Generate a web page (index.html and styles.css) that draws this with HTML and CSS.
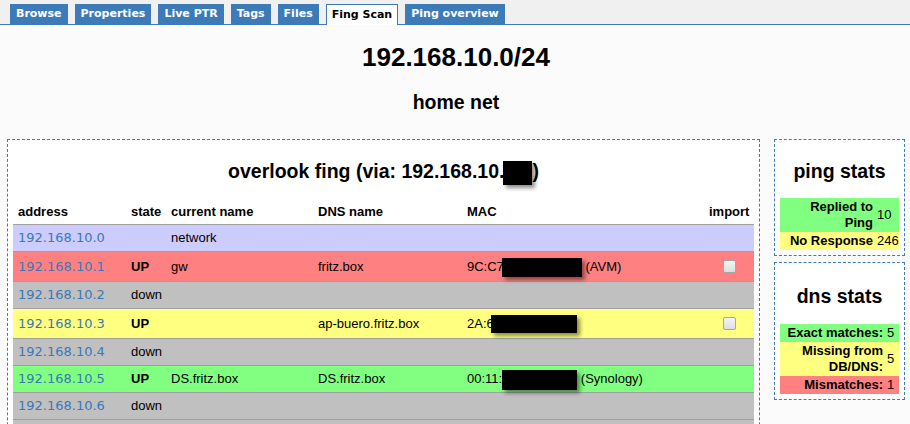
FILE: index.html
```html
<!DOCTYPE html>
<html lang="en">
<head>
<meta charset="utf-8">
<title>Fing Scan - 192.168.10.0/24</title>
<link rel="stylesheet" href="styles.css">
</head>
<body>
<nav class="tabs">
  <a class="tab">Browse</a>
  <a class="tab">Properties</a>
  <a class="tab">Live PTR</a>
  <a class="tab">Tags</a>
  <a class="tab">Files</a>
  <a class="tab active">Fing Scan</a>
  <a class="tab">Ping overview</a>
</nav>
<div class="content">
  <h1 class="title">192.168.10.0/24</h1>
  <h2 class="subtitle">home net</h2>
  <div class="layout">
    <section class="panel main">
      <h2 class="panel-title main-title">overlook fing (via: 192.168.10.<span class="redact redact-title"></span>)</h2>
      <table class="scan">
        <colgroup>
          <col class="c-addr"><col class="c-state"><col class="c-name"><col class="c-dns"><col class="c-mac"><col class="c-imp">
        </colgroup>
        <thead>
          <tr><th>address</th><th>state</th><th>current name</th><th>DNS name</th><th>MAC</th><th class="imp">import</th></tr>
        </thead>
        <tbody>
          <tr class="net"><td class="addr">192.168.10.0</td><td></td><td>network</td><td></td><td></td><td></td></tr>
          <tr class="bad"><td class="addr">192.168.10.1</td><td class="up">UP</td><td>gw</td><td>fritz.box</td><td>9C:C7<span class="redact r1"></span> (AVM)</td><td class="imp"><input type="checkbox"></td></tr>
          <tr class="off"><td class="addr">192.168.10.2</td><td>down</td><td></td><td></td><td></td><td></td></tr>
          <tr class="warn"><td class="addr">192.168.10.3</td><td class="up">UP</td><td></td><td>ap-buero.fritz.box</td><td>2A:6<span class="redact r3"></span></td><td class="imp"><input type="checkbox"></td></tr>
          <tr class="off"><td class="addr">192.168.10.4</td><td>down</td><td></td><td></td><td></td><td></td></tr>
          <tr class="ok"><td class="addr">192.168.10.5</td><td class="up">UP</td><td>DS.fritz.box</td><td>DS.fritz.box</td><td>00:11:<span class="redact r5"></span> (Synology)</td><td></td></tr>
          <tr class="off"><td class="addr">192.168.10.6</td><td>down</td><td></td><td></td><td></td><td></td></tr>
          <tr class="off"><td class="addr">192.168.10.7</td><td>down</td><td></td><td></td><td></td><td></td></tr>
          <tr class="off"><td class="addr">192.168.10.8</td><td>down</td><td></td><td></td><td></td><td></td></tr>
        </tbody>
      </table>
    </section>
    <aside class="sidebar">
      <section class="panel stats">
        <h2 class="panel-title">ping stats</h2>
        <table class="stat ping">
          <colgroup><col><col class="v-ping"></colgroup>
          <tr class="ok"><td class="label">Replied to Ping</td><td class="value">10</td></tr>
          <tr class="warn"><td class="label">No Response</td><td class="value">246</td></tr>
        </table>
      </section>
      <section class="panel stats">
        <h2 class="panel-title dns-title">dns stats</h2>
        <table class="stat dns">
          <colgroup><col><col class="v-dns"></colgroup>
          <tr class="ok"><td class="label">Exact matches:</td><td class="value">5</td></tr>
          <tr class="warn"><td class="label">Missing from DB/DNS:</td><td class="value">5</td></tr>
          <tr class="bad"><td class="label">Mismatches:</td><td class="value">1</td></tr>
        </table>
      </section>
    </aside>
  </div>
</div>
</body>
</html>
```
FILE: styles.css
```css
html {
  overflow: hidden;
}
body {
  margin: 0;
  background: #fbfbfb;
  font-family: "Liberation Sans", Arial, sans-serif;
  font-size: 13px;
  color: #000;
}

/* tabs */
.tabs {
  display: flex;
  align-items: flex-start;
  gap: 7px;
  height: 20px;
  padding: 4px 0 0 10px;
  background: #f0f0f0;
  border-bottom: 1px solid #3d7ab8;
}
.tab {
  display: block;
  height: 20px;
  line-height: 20px;
  padding: 0 6px;
  background: #3d7ab8;
  color: #fff;
  font-family: "DejaVu Sans", Verdana, sans-serif;
  font-size: 11px;
  font-weight: bold;
  cursor: pointer;
}
.tab.active {
  background: #fff;
  color: #000;
  border: 1px solid #3d7ab8;
  border-bottom: none;
  padding: 0 5px;
  line-height: 19px;
}

/* headings */
.content {
  padding: 0 5px 0 7px;
}
.title {
  margin: 17px 0 0;
  font-size: 26px;
  line-height: 30px;
  text-align: center;
}
.subtitle {
  margin: 19px 0 0;
  font-size: 19.5px;
  line-height: 22px;
  text-align: center;
}

/* layout */
.layout {
  display: flex;
  align-items: flex-start;
  gap: 14px;
  margin-top: 26px;
}
.panel {
  background: #fff;
  border: 1px dashed #3d7ab8;
  padding: 5px;
}
.main {
  flex: 1;
}
.sidebar {
  width: 131px;
  display: flex;
  flex-direction: column;
  gap: 6px;
}
.panel-title {
  margin: 15px 0 16px;
  font-size: 19.5px;
  line-height: 22px;
  text-align: center;
}
.main-title {
  margin: 15px 0 18px;
}
.dns-title {
  margin: 17px 0 17px;
}

/* redaction boxes (kept out of the line height) */
.redact {
  display: inline-block;
  background: #000;
  box-shadow: 3px 3px 4px rgba(0, 0, 0, 0.45);
  vertical-align: middle;
}
.redact-title {
  width: 29px;
  height: 24px;
  margin: -6px 0 -6px -1px;
}
.r1 {
  width: 80px;
  height: 19px;
  margin: -5px 0 -5px -2px;
}
.r3 {
  width: 86px;
  height: 18px;
  margin: -5px 0 -5px -3px;
}
.r5 {
  width: 75px;
  height: 20px;
  margin: -6px 0 -6px 0;
}

/* scan table */
.scan {
  width: 100%;
  border-collapse: collapse;
  table-layout: fixed;
}
.c-addr { width: 113px; }
.c-state { width: 40px; }
.c-name { width: 147px; }
.c-dns { width: 149px; }
.c-imp { width: 50px; }
.scan th {
  text-align: left;
  padding: 4px 5px;
  line-height: 16px;
  border-bottom: 1px solid #a0a0a0;
}
.scan td {
  padding: 5px;
  line-height: 16px;
  border-bottom: 1px solid #a0a0a0;
  vertical-align: middle;
  white-space: nowrap;
}
.scan .imp {
  text-align: center;
}
.scan input {
  -webkit-appearance: none;
  appearance: none;
  box-sizing: border-box;
  width: 13px;
  height: 13px;
  margin: 3px 3px 3px 4px;
  vertical-align: middle;
  border: 1px solid #a6a6a6;
  border-radius: 2px;
  background: linear-gradient(#f4f4f4, #dedede);
}
.addr {
  font-family: "DejaVu Sans", Verdana, sans-serif;
  color: #3b78b8;
}
.up {
  font-weight: bold;
}

.net { background: #ccccff; }
.bad { background: #ff8080; }
.off { background: #c0c0c0; }
.warn { background: #ffff80; }
.ok { background: #80ff80; }

/* stats tables */
.stat {
  width: 100%;
  border-collapse: collapse;
  table-layout: fixed;
}
.v-ping { width: 23px; }
.v-dns { width: 13px; }
.stat td {
  line-height: 16px;
  vertical-align: middle;
}
.stat .label {
  font-weight: bold;
  text-align: right;
  padding: 1px 3px 1px 1px;
}
.stat .value {
  padding: 1px 0 1px 1px;
  white-space: nowrap;
}
.dns td {
  padding-top: 1.5px;
  padding-bottom: 1.5px;
}
```
